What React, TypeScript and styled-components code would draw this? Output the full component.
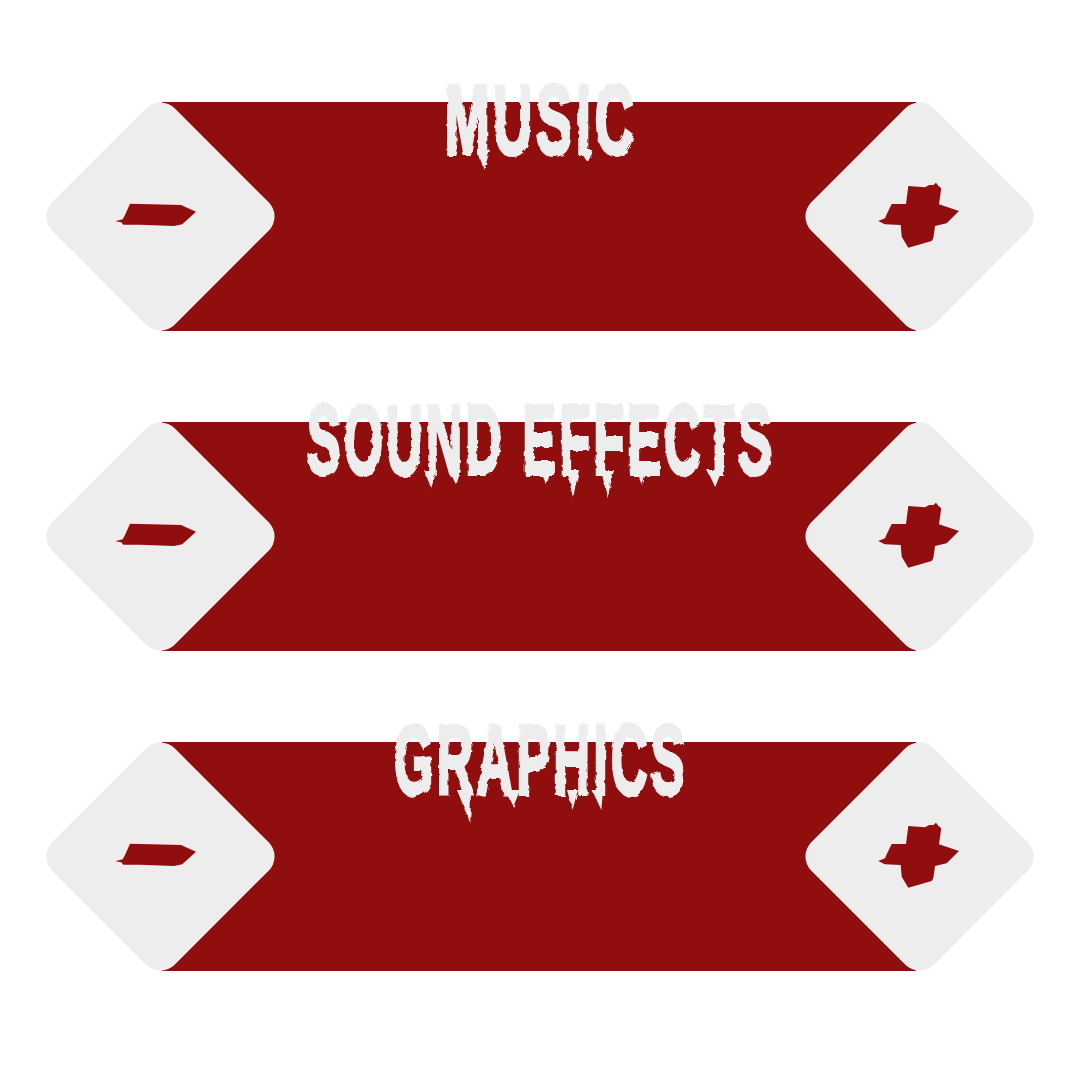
import styled, { createGlobalStyle } from 'styled-components'

const GlobalStyle = createGlobalStyle`
  html, body {
    margin: 0;
    background: #ffffff;
  }
`

const Page = styled.div`
  width: 1080px;
  height: 1080px;
  box-sizing: border-box;
  padding: 102px 46px 0;
  display: flex;
  flex-direction: column;
  gap: 91px;
  overflow: hidden;
`

const Row = styled.div`
  display: grid;
  grid-template-columns: 229px minmax(0, 1fr) 229px;
  height: 229px;
  background: linear-gradient(#900e0d, #900e0d) 116px 0 / 754px 100% no-repeat;
`

const TitleCell = styled.div`
  position: relative;
  min-width: 0;
  filter: url(#rough);
`

const Title = styled.h2<{ $sx: number }>`
  margin: -24px 0 0;
  height: 84px;
  display: flex;
  justify-content: center;
  align-items: center;
  font-family: 'Liberation Sans', sans-serif;
  font-weight: 700;
  font-size: 72px;
  line-height: 84px;
  letter-spacing: 5px;
  white-space: nowrap;
  color: #ededed;
  -webkit-text-stroke: 3px #ededed;
  transform: translateX(1px) scale(${(p) => p.$sx}, 1.36);
`

const Drip = styled.span<{ $x: number; $w: number; $tipY: number; $tip: number }>`
  position: absolute;
  left: ${(p) => p.$x}px;
  top: 48px;
  width: ${(p) => p.$w}px;
  height: ${(p) => p.$tipY - 48}px;
  background: #ededed;
  clip-path: polygon(0 0, 100% 0, ${(p) => p.$tip}% 100%);
`

const Diamond = styled.button`
  position: relative;
  width: 229px;
  height: 229px;
  padding: 0;
  border: 0;
  background: none;
  cursor: pointer;

  &::before {
    content: '';
    position: absolute;
    left: 28px;
    top: 28px;
    width: 173px;
    height: 173px;
    border-radius: 20px;
    background: #ededed;
    transform: rotate(45deg);
  }
`

const Glyph = styled.svg`
  position: relative;
  display: block;
  width: 229px;
  height: 229px;
  fill: #900e0d;
`

const MINUS =
  'M84 101.7 L135 103 L150 109.7 L136.3 122.3 L128 124 L94 122.7 L77.3 122.7 L75.3 120.3 L69.3 119.3 L76.7 117.3 L79 113 Z'

const PLUS =
  'M103.3 84 L120 85.3 L124.3 83 L128.3 83 L131 80.7 L133.3 83.7 L136.3 86.3 L134 102.3 L154 109 L141.7 121.3 L130 124 L128.3 136.3 L126.7 139 L103.3 145.7 L96.7 134.7 L95.7 123 L80 122.3 L77.7 121.3 L73.3 119 L80 116.3 L81.7 112.3 L86.7 102 L101 102 Z'

const MinusIcon = () => (
  <Glyph viewBox="0 0 229 229">
    <path d={MINUS} />
  </Glyph>
)

const PlusIcon = () => (
  <Glyph viewBox="0 0 229 229">
    <path d={PLUS} />
  </Glyph>
)

// drips: x from the left of the title cell, tipY from the top of the row
const settings = [
  {
    name: 'MUSIC',
    sx: 0.75,
    drips: [
      { x: 202, w: 13, tipY: 68, tip: 55 },
      { x: 305, w: 14, tipY: 60, tip: 55 },
    ],
  },
  {
    name: 'SOUND EFFECTS',
    sx: 0.695,
    drips: [
      { x: 149, w: 13, tipY: 66, tip: 55 },
      { x: 174, w: 12, tipY: 63, tip: 60 },
      { x: 265, w: 11, tipY: 63, tip: 60 },
      { x: 292, w: 12, tipY: 76, tip: 50 },
      { x: 326, w: 13, tipY: 76, tip: 50 },
      { x: 361, w: 11, tipY: 63, tip: 60 },
      { x: 432, w: 15, tipY: 65, tip: 55 },
    ],
  },
  {
    name: 'GRAPHICS',
    sx: 0.7,
    drips: [
      { x: 182, w: 14, tipY: 81, tip: 95 },
      { x: 230, w: 15, tipY: 65, tip: 55 },
      { x: 292, w: 11, tipY: 68, tip: 50 },
      { x: 317, w: 11, tipY: 68, tip: 85 },
    ],
  },
]

export default function App() {
  return (
    <Page>
      <GlobalStyle />
      <svg width="0" height="0" style={{ position: 'absolute' }}>
        <filter id="rough" x="-5%" y="-25%" width="110%" height="150%">
          <feTurbulence type="fractalNoise" baseFrequency="0.14" numOctaves="2" seed="4" />
          <feDisplacementMap in="SourceGraphic" scale="4" />
        </filter>
      </svg>
      {settings.map((s) => (
        <Row key={s.name}>
          <Diamond aria-label={`Lower ${s.name}`}>
            <MinusIcon />
          </Diamond>
          <TitleCell>
            <Title $sx={s.sx}>{s.name}</Title>
            {s.drips.map((d) => (
              <Drip key={d.x} $x={d.x} $w={d.w} $tipY={d.tipY} $tip={d.tip} />
            ))}
          </TitleCell>
          <Diamond aria-label={`Raise ${s.name}`}>
            <PlusIcon />
          </Diamond>
        </Row>
      ))}
    </Page>
  )
}
